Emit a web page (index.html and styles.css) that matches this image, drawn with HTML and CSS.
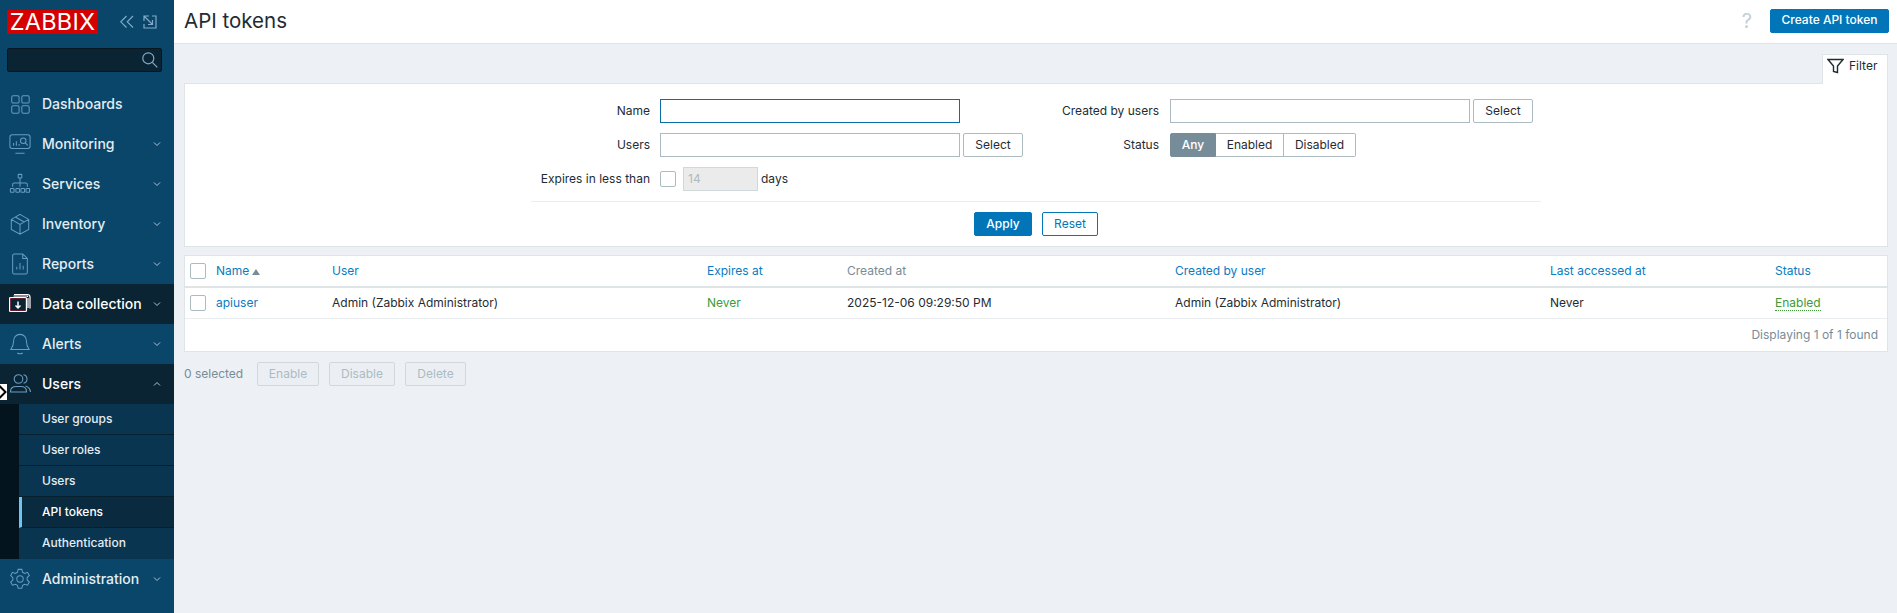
FILE: index.html
```html
<!DOCTYPE html>
<html lang="en">
<head>
<meta charset="utf-8">
<title>API tokens</title>
<link rel="stylesheet" href="styles.css">
</head>
<body>
<aside class="sidebar">
  <div class="brand">
    <div class="logo">ZABBIX</div>
    <div class="brand-tools">
      <svg class="tool" viewBox="0 0 14 14"><path d="M6.500 1 .8 6.800l5.700 5.700M13 1 7.300 6.800l5.700 5.700"/></svg>
      <svg class="tool" viewBox="0 0 14 14"><path d="M1 6V1h5M1 1l8.500 8.500M9.500 5v4.500H5M9 1h4v12H1V9"/></svg>
    </div>
  </div>
  <div class="search">
    <svg class="search-icon" viewBox="0 0 16 16"><circle cx="6.300" cy="6.300" r="5.500"/><path d="m10.300 10.300 5 5"/></svg>
  </div>
  <nav class="nav">
    <a class="nav-item"><svg class="nav-icon" viewBox="0 0 24 24"><rect x="3" y="3" width="8" height="8" rx="1.500"/><rect x="14" y="3" width="8" height="8" rx="1.500"/><rect x="3" y="14" width="8" height="8" rx="1.500"/><rect x="14" y="14" width="8" height="8" rx="1.500"/></svg><span class="nav-label">Dashboards</span></a>
    <a class="nav-item"><svg class="nav-icon" viewBox="0 0 24 24"><rect x="1" y="2" width="22" height="15" rx="2.500"/><path d="M7 22h10M5 14v-3M8 14V9M11 14v-2"/><circle cx="15.500" cy="8.500" r="3"/><path d="m17.700 10.700 2.800 2.800"/></svg><span class="nav-label">Monitoring</span><svg class="chev" viewBox="0 0 8 8"><path d="m1 2.500 3 3 3-3"/></svg></a>
    <a class="nav-item"><svg class="nav-icon" viewBox="0 0 24 24"><rect x="10" y="1.500" width="4" height="4" rx=".8"/><path d="M12 5.500V15M4 15v-2.500q0-1.500 1.500-1.500h13q1.500 0 1.500 1.500V15"/><rect x="1.500" y="17" width="4" height="4" rx=".8"/><rect x="7.500" y="17" width="4" height="4" rx=".8"/><rect x="13" y="17" width="4" height="4" rx=".8"/><rect x="18.500" y="17" width="4" height="4" rx=".8"/></svg><span class="nav-label">Services</span><svg class="chev" viewBox="0 0 8 8"><path d="m1 2.500 3 3 3-3"/></svg></a>
    <a class="nav-item"><svg class="nav-icon" viewBox="0 0 24 24"><path d="M12 1.500 21.500 7v11L12 23l-9.500-5V7zM2.500 7l9.500 5.500L21.500 7M12 12.500V23M7 4.300l9.500 5.500"/></svg><span class="nav-label">Inventory</span><svg class="chev" viewBox="0 0 8 8"><path d="m1 2.500 3 3 3-3"/></svg></a>
    <a class="nav-item"><svg class="nav-icon" viewBox="0 0 24 24"><path d="M15 1H6Q4 1 4 3v18q0 2 2 2h12q2 0 2-2V6zM15 1v5h5M8.500 18v-3M12 18v-7M15.500 18v-4"/></svg><span class="nav-label">Reports</span><svg class="chev" viewBox="0 0 8 8"><path d="m1 2.500 3 3 3-3"/></svg></a>
    <a class="nav-item is-dark"><svg class="nav-icon nav-icon-light" viewBox="0 0 22 22"><rect class="fringe" x="1.300" y="5.300" width="15.400" height="12.400"/><rect x=".5" y="4.500" width="17" height="14" rx="1"/><path d="M5 1.500h13.500q2.500 0 2.500 2.500v11.500M4.500 3h14v1M19 5v10"/><path class="arrow" d="M9 8.500v6.500M6.500 12.500 9 15l2.500-2.500"/></svg><span class="nav-label nav-label-light">Data collection</span><svg class="chev" viewBox="0 0 8 8"><path d="m1 2.500 3 3 3-3"/></svg></a>
    <a class="nav-item"><svg class="nav-icon" viewBox="0 0 24 24"><path d="M12 1.500c-4.500 0-7 3.500-7 7.500 0 5-1.500 7-3 9h20c-1.500-2-3-4-3-9 0-4-2.500-7.500-7-7.500zM9 21.800q3 1.700 6 0"/></svg><span class="nav-label">Alerts</span><svg class="chev" viewBox="0 0 8 8"><path d="m1 2.500 3 3 3-3"/></svg></a>
    <a class="nav-item is-dark"><svg class="nav-icon" viewBox="0 0 22 22"><circle cx="9.500" cy="6" r="4.300"/><path d="M1.500 19v-.5q0-5 6-5h4q6 0 6 5v.5zM14.500 1.800q3.500.5 3.500 4.200t-3.500 4.200M16.500 13q4.500 1.500 5 6"/></svg><span class="nav-label nav-label-light">Users</span><svg class="chev" viewBox="0 0 8 8"><path d="m1 5.500 3-3 3 3"/></svg></a>
    <div class="submenu">
      <a class="sub-item">User groups</a>
      <a class="sub-item">User roles</a>
      <a class="sub-item">Users</a>
      <a class="sub-item is-active">API tokens</a>
      <a class="sub-item is-last">Authentication</a>
    </div>
    <a class="nav-item"><svg class="nav-icon" viewBox="0 0 24 24"><circle cx="12" cy="12" r="3.500"/><path d="M10 1.500h4l.8 3.200 2.400 1.200 3-1.200 2 3.400-2.400 2.300v2.600l2.400 2.400-2 3.400-3-1.100-2.400 1.300-.8 3.100h-4l-.8-3.100-2.400-1.300-3 1.100-2-3.400L4.200 13.100v-2.600L1.800 8.100l2-3.400 3 1.200 2.400-1.200z"/></svg><span class="nav-label">Administration</span><svg class="chev" viewBox="0 0 8 8"><path d="m1 2.500 3 3 3-3"/></svg></a>
  </nav>
  <div class="cursor-mark"><svg viewBox="0 0 7 16"><path d="M-1 1.500 5.500 8-1 14.500"/></svg></div>
</aside>

<main class="main">
  <header class="topbar">
    <h1 class="title">API tokens</h1>
    <div class="top-actions">
      <span class="help">?</span>
      <button class="btn btn-primary btn-create">Create API token</button>
    </div>
  </header>

  <div class="content">
    <div class="filter-tabs">
      <div class="filter-tab">
        <svg class="filter-icon" viewBox="0 0 17 16"><path d="M1 1.500h15L10.500 8v6.500l-4-1V8z"/></svg>
        <span>Filter</span>
      </div>
    </div>
    <section class="filter-panel">
      <div class="filter-form">
        <div class="filter-grid">
          <div class="filter-col">
            <div class="form-row">
              <label class="form-label">Name</label>
              <input class="input input-focus" type="text">
            </div>
            <div class="form-row">
              <label class="form-label">Users</label>
              <input class="input" type="text">
              <button class="btn btn-grey">Select</button>
            </div>
            <div class="form-row">
              <label class="form-label">Expires in less than</label>
              <span class="checkbox"></span>
              <input class="input input-disabled" type="text" value="14" disabled>
              <span class="days">days</span>
            </div>
          </div>
          <div class="filter-col filter-col-right">
            <div class="form-row">
              <label class="form-label">Created by users</label>
              <input class="input" type="text">
              <button class="btn btn-grey">Select</button>
            </div>
            <div class="form-row">
              <label class="form-label">Status</label>
              <div class="segmented">
                <span class="seg seg-on">Any</span>
                <span class="seg seg-mid">Enabled</span>
                <span class="seg seg-end">Disabled</span>
              </div>
            </div>
          </div>
        </div>
        <div class="filter-buttons">
          <button class="btn btn-primary btn-apply">Apply</button>
          <button class="btn btn-outline">Reset</button>
        </div>
      </div>
    </section>

    <section class="table-card">
      <table class="list">
        <colgroup>
          <col class="c-check"><col class="c-name"><col class="c-user"><col class="c-exp"><col class="c-created"><col class="c-by"><col class="c-last"><col class="c-status">
        </colgroup>
        <thead>
          <tr>
            <th><span class="checkbox"></span></th>
            <th><a class="link">Name</a><span class="sort-up"></span></th>
            <th><a class="link">User</a></th>
            <th><a class="link">Expires at</a></th>
            <th class="plain-head">Created at</th>
            <th><a class="link">Created by user</a></th>
            <th><a class="link">Last accessed at</a></th>
            <th><a class="link">Status</a></th>
          </tr>
        </thead>
        <tbody>
          <tr>
            <td><span class="checkbox"></span></td>
            <td><a class="link">apiuser</a></td>
            <td>Admin (Zabbix Administrator)</td>
            <td class="green">Never</td>
            <td>2025-12-06 09:29:50 PM</td>
            <td>Admin (Zabbix Administrator)</td>
            <td>Never</td>
            <td><span class="status-enabled">Enabled</span></td>
          </tr>
        </tbody>
      </table>
      <div class="table-foot">Displaying 1 of 1 found</div>
    </section>

    <div class="actions">
      <span class="selected">0 selected</span>
      <button class="btn btn-off">Enable</button>
      <button class="btn btn-off">Disable</button>
      <button class="btn btn-off">Delete</button>
    </div>
  </div>
</main>
</body>
</html>
```

FILE: styles.css
```css
* { box-sizing: border-box; }
html, body { height: 100%; }
body {
  margin: 0;
  display: flex;
  overflow: hidden;
  font-family: Inter, "Liberation Sans", sans-serif;
  font-size: 12px;
  color: #1f2c33;
  background: #edf1f5;
}
/* Sidebar */
.sidebar {
  position: relative;
  flex: 0 0 174px;
  height: 100%;
  background: #0a466a;
  color: #f2f2f2;
}
.brand {
  display: flex;
  align-items: flex-start;
  height: 48px;
  padding: 10px 0 0 7px;
}
.logo {
  width: 91px;
  height: 24px;
  background: #d40000;
  color: #fff;
  font-size: 23.5px;
  line-height: 24px;
  letter-spacing: .2px;
  text-align: center;
}
.brand-tools { display: flex; gap: 9px; margin: 5px 0 0 22px; }
.tool { width: 14px; height: 14px; fill: none; stroke: #7fabc9; stroke-width: 1.2; }
.search {
  display: flex;
  align-items: center;
  justify-content: flex-end;
  width: 155px;
  height: 24px;
  margin-left: 7px;
  padding-right: 3px;
  background: #0a2433;
  border: 1px solid #061722;
  border-radius: 2px;
}
.search-icon { width: 16px; height: 16px; fill: none; stroke: #7fabc9; stroke-width: 1.2; }
.nav { margin-top: 12px; }
.nav-item {
  display: flex;
  align-items: center;
  height: 40px;
  padding-left: 9px;
}
.nav-item.is-dark { background: #0a2433; }
.nav-icon { flex: 0 0 22px; width: 22px; height: 22px; fill: none; stroke: #6a9cc2; stroke-width: 1.1; }
.nav-icon-light { stroke: #fff; stroke-width: 1.2; }
.fringe { stroke: #8a1f2e; stroke-width: .8; }
.arrow { stroke-width: 1.5; }
.nav-label { flex: 1; margin-left: 11px; padding-bottom: 2px; font-size: 14px; font-weight: 500; color: #e4edf3; }
.nav-label-light { color: #fff; }
.chev { flex: 0 0 8px; width: 8px; height: 8px; margin-right: 13px; fill: none; stroke: #a9c4d6; stroke-width: 1; }
.submenu {
  padding-left: 19px;
  background: #03141e;
}
.sub-item {
  display: flex;
  align-items: center;
  height: 31px;
  padding: 0 0 2px 23px;
  font-weight: 500;
  color: #e4edf3;
  background: #0a3550;
  border-bottom: 1px solid #05202f;
}
.sub-item.is-active {
  padding-left: 20px;
  color: #fff;
  background: #0a2a40;
  border-left: 3px solid #6fc4f2;
}
.sub-item.is-last { border-bottom: 0; }
.cursor-mark {
  position: absolute;
  left: 0;
  top: 384px;
  width: 7px;
  height: 16px;
  background: #fff;
}
.cursor-mark svg { display: block; width: 7px; height: 16px; fill: none; stroke: #000; stroke-width: 2; }
/* Main */
.main { flex: 1; min-width: 0; }
.topbar {
  display: flex;
  align-items: center;
  justify-content: space-between;
  height: 44px;
  padding: 0 8px 2px 10px;
  background: #fff;
  border-bottom: 1px solid #dfe4e7;
}
.title { margin: 0; font-size: 20.5px; font-weight: 400; color: #1f2c33; }
.top-actions { display: flex; align-items: center; gap: 18px; }
.help { font-size: 20px; color: #c5ced3; }
.btn {
  height: 24px;
  padding: 0 0 2px;
  font-family: inherit;
  font-size: 12px;
  border-radius: 2px;
  border: 1px solid transparent;
  background: #fff;
  color: #1f2c33;
}
.btn-primary { background: #0275b8; border-color: #0275b8; color: #fff; font-weight: 500; }
.btn-create { width: 119px; }
.btn-grey { width: 60px; border-color: #acbbc2; }
.btn-apply { width: 58px; }
.btn-outline { width: 56px; border-color: #0275b8; color: #0275b8; }
.btn-off { background: #ebeff3; border-color: #d1d8dc; color: #acbbc2; }
.content { padding: 10px 9px 0 10px; }
.filter-tabs { display: flex; justify-content: flex-end; }
.filter-tab {
  display: flex;
  align-items: center;
  gap: 5px;
  width: 66px;
  height: 30px;
  margin-bottom: -1px;
  padding: 0 0 8px 4px;
  background: #fff;
  border: 1px solid #dfe4e7;
  border-bottom: 0;
  position: relative;
  z-index: 1;
}
.filter-icon { flex: none; width: 17px; height: 16px; fill: none; stroke: #1f2c33; stroke-width: 1.4; }
.filter-panel {
  height: 164px;
  background: #fff;
  border: 1px solid #dfe4e7;
}
.filter-form { width: 1010px; margin: 0 auto; padding-top: 15px; }
.filter-grid {
  display: grid;
  grid-template-columns: 505px 505px;
  height: 103px;
  border-bottom: 1px solid #ebeef0;
}
.filter-col { display: flex; flex-direction: column; gap: 10px; }
.filter-col-right .form-label { width: 123px; margin-right: 11px; }
.form-row { display: flex; align-items: center; height: 24px; }
.form-label { width: 119px; margin-right: 10px; padding-bottom: 2px; text-align: right; white-space: nowrap; }
.input {
  width: 300px;
  height: 24px;
  padding: 0 4px;
  font-family: inherit;
  font-size: 12px;
  color: #1f2c33;
  border: 1px solid #acbbc2;
  border-radius: 0;
  outline: 0;
  background: #fff;
}
.input + .btn { margin-left: 3px; }
.input-focus { border-color: #0a6ea8; }
.input-disabled { width: 75px; margin-left: 7px; padding-bottom: 2px; background: #ebebeb; border-color: #d1d8dc; color: #acbbc2; }
.days { margin-left: 3px; padding-bottom: 2px; }
.checkbox {
  display: inline-block;
  flex: none;
  width: 16px;
  height: 16px;
  vertical-align: middle;
  background: #fff;
  border: 1px solid #acbbc2;
  border-radius: 2px;
}
.segmented { display: flex; height: 24px; }
.seg {
  display: flex;
  align-items: center;
  justify-content: center;
  padding-bottom: 2px;
  border: 1px solid #acbbc2;
  border-left: 0;
}
.seg-on { width: 46px; background: #768d99; border: 1px solid #768d99; color: #fff; font-weight: 500; border-radius: 2px 0 0 2px; }
.seg-mid { width: 68px; }
.seg-end { width: 72px; border-radius: 0 2px 2px 0; }
.filter-buttons { display: flex; justify-content: center; gap: 10px; padding-top: 10px; }
/* Table */
.table-card {
  margin-top: 8px;
  height: 97px;
  background: #fff;
  border: 1px solid #dfe4e7;
}
.list { width: 100%; table-layout: fixed; border-collapse: separate; border-spacing: 0; }
.c-check { width: 31px; }
.c-name { width: 116px; }
.c-user { width: 375px; }
.c-exp { width: 140px; }
.c-created { width: 328px; }
.c-by { width: 375px; }
.c-last { width: 225px; }
.list th, .list td { padding: 0; text-align: left; font-weight: 400; white-space: nowrap; }
.list th + th, .list td + td { padding-bottom: 2px; }
.list th:first-child, .list td:first-child { padding-left: 5px; }
.list th { height: 32px; border-bottom: 2px solid #dfe4e7; }
.list td { height: 31px; border-bottom: 1px solid #ebeef0; }
.plain-head { color: #768d99; }
.link { color: #0a7cc0; }
.sort-up {
  display: inline-block;
  margin-left: 3px;
  vertical-align: 0;
  border: 4px solid transparent;
  border-top: 0;
  border-bottom: 6px solid #768d99;
}
.green { color: #3d9a3d; }
.status-enabled { color: #3d9a3d; border-bottom: 1px dotted #3d9a3d; }
.table-foot { padding: 8px 9px 0 0; text-align: right; color: #768d99; }
.actions { display: flex; align-items: center; gap: 10px; margin-top: 10px; }
.selected { width: 63px; padding-bottom: 2px; color: #768d99; }
.btn-off:nth-of-type(1) { width: 62px; }
.btn-off:nth-of-type(2) { width: 66px; }
.btn-off:nth-of-type(3) { width: 61px; }
```
